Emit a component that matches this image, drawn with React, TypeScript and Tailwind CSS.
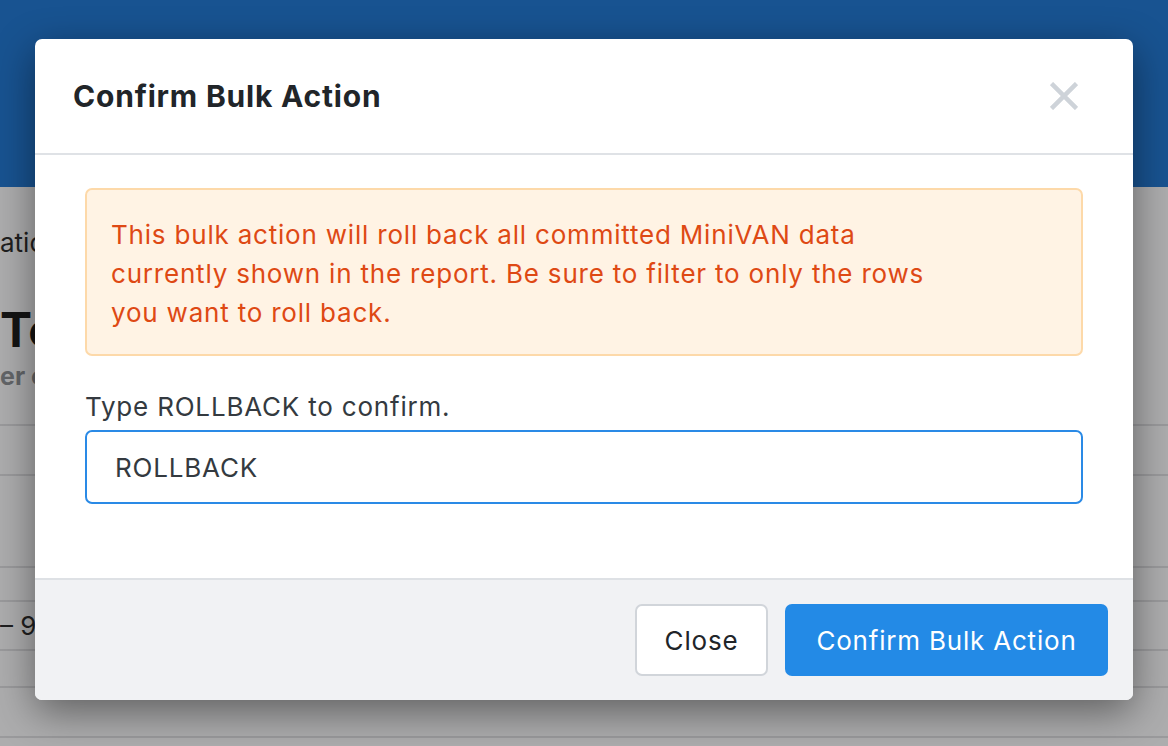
function BackgroundPage() {
  return (
    <div className="absolute inset-0 flex flex-col">
      <div className="h-[187px] bg-[#185391] shrink-0" />
      <div className="flex-1 bg-[#adadae] flex flex-col text-[#1f1f20]">
        <div className="h-[110px] flex items-center text-[26px]">atic</div>
        <div className="h-[66px] flex items-center text-[48px] font-bold text-[#141414]">Te</div>
        <div className="h-[28px] flex items-center text-[25px] font-bold text-[#636568]">er c</div>
        <div className="h-[33px]" />
        <div className="h-[2px] bg-[#9a9a9c]" />
        <div className="h-[48px]" />
        <div className="h-[2px] bg-[#9a9a9c]" />
        <div className="h-[90px]" />
        <div className="h-[2px] bg-[#9a9a9c]" />
        <div className="h-[32px]" />
        <div className="h-[2px] bg-[#9a9a9c]" />
        <div className="h-[47px] flex items-center text-[26px]">– 9/</div>
        <div className="h-[2px] bg-[#9a9a9c]" />
        <div className="h-[35px]" />
        <div className="h-[2px] bg-[#9a9a9c]" />
        <div className="h-[48px]" />
        <div className="h-[2px] bg-[#9a9a9c]" />
      </div>
    </div>
  )
}

export default function App() {
  return (
    <div
      className="relative w-[1168px] h-[746px] overflow-hidden"
      style={{ fontFamily: 'Inter, "Noto Sans", sans-serif' }}
    >
      <BackgroundPage />
      <div className="absolute inset-0 pt-[39px] px-[35px]">
        <div className="w-[1098px] bg-white rounded-[7px] overflow-hidden shadow-[0_12px_40px_rgba(0,0,0,0.45)]">
          <div className="h-[116px] flex items-center justify-between pl-[38px] pr-[55px] border-b-2 border-[#dfe2e6]">
            <h2 className="text-[30px] font-bold text-[#212529] tracking-[0.8px]">Confirm Bulk Action</h2>
            <button className="text-[#ced3d9]">
              <svg width="28" height="28" viewBox="0 0 28 28" fill="none" stroke="currentColor" strokeWidth={4.5}>
                <path d="M1.5 1.5L26.5 26.5M26.5 1.5L1.5 26.5" />
              </svg>
            </button>
          </div>

          <div className="px-[50px] pt-[33px] pb-[74px] tracking-[0.8px]">
            <div className="rounded-[7px] border-2 border-[#fdd9a9] bg-[#fff3e4] px-[24px] pt-[25px] pb-[22px] text-[26px] leading-[39px] text-[#de4914]">
              This bulk action will roll back all committed MiniVAN data
              <br />
              currently shown in the report. Be sure to filter to only the rows
              <br />
              you want to roll back.
            </div>

            <label className="block mt-[31px] text-[26px] leading-[39px] text-[#343a40]">
              Type ROLLBACK to confirm.
            </label>
            <div className="mt-[4px] h-[74px] rounded-[7px] border-2 border-[#2a8ae6] flex items-center px-[28px] text-[26px] text-[#343a40]">
              ROLLBACK
            </div>
          </div>

          <div className="h-[122px] bg-[#f1f2f4] border-t-2 border-[#dee1e5] flex items-center justify-end gap-[17px] pr-[25px] tracking-[0.8px]">
            <button className="h-[72px] w-[133px] rounded-[7px] border-2 border-[#d1d5da] bg-white text-[26px] text-[#212529]">
              Close
            </button>
            <button className="h-[72px] w-[323px] rounded-[7px] bg-[#238ae6] text-[26px] text-white">
              Confirm Bulk Action
            </button>
          </div>
        </div>
      </div>
    </div>
  )
}
